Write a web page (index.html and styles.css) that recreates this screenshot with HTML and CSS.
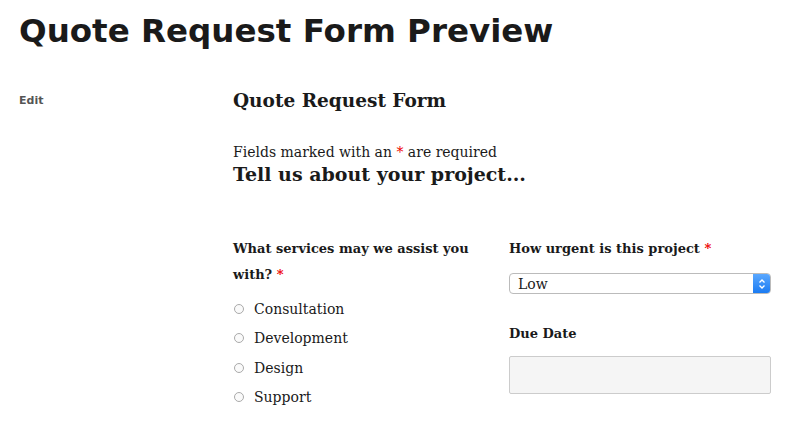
FILE: index.html
```html
<!DOCTYPE html>
<html>
<head>
<meta charset="utf-8">
<link rel="stylesheet" href="styles.css">
</head>
<body>
<h1 class="page-title">Quote Request Form Preview</h1>
<div class="layout">
  <aside class="side"><a class="edit" href="#">Edit</a></aside>
  <main class="form">
    <h2 class="form-title">Quote Request Form</h2>
    <p class="note">Fields marked with an <span class="req">*</span> are required</p>
    <h3 class="section">Tell us about your project...</h3>
    <div class="cols">
      <div class="col">
        <div class="label">What services may we assist you<br>with? <span class="req">*</span></div>
        <ul class="radios">
          <li><span class="radio"></span>Consultation</li>
          <li><span class="radio"></span>Development</li>
          <li><span class="radio"></span>Design</li>
          <li><span class="radio"></span>Support</li>
        </ul>
      </div>
      <div class="col">
        <div class="label">How urgent is this project <span class="req">*</span></div>
        <div class="select"><span class="select-val">Low</span><span class="select-btn"><svg width="8" height="12" viewBox="0 0 8 12"><path d="M1.5 4.5 L4 2 L6.5 4.5 M1.5 7.5 L4 10 L6.5 7.5" fill="none" stroke="#fff" stroke-width="1.3"/></svg></span></div>
        <div class="label due">Due Date</div>
        <div class="input"></div>
      </div>
    </div>
  </main>
</div>
</body>
</html>
```
FILE: styles.css
```css
* { box-sizing: border-box; }
body { margin: 0; background: #fff; color: #1a1a1a; font-family: "DejaVu Serif", serif; }
.page-title { margin: 0; padding: 10px 0 0 19px; font-family: "DejaVu Sans", sans-serif; font-weight: bold; font-size: 32.5px; line-height: 42px; color: #1a1a1a; }
.layout { display: flex; padding-top: 37px; }
.side { width: 233px; padding-left: 19px; }
.edit { font-family: "DejaVu Sans", sans-serif; font-size: 11px; color: #555; text-decoration: none; font-weight: 600; }
.form { width: 538px; }
.form-title { margin: 0; font-size: 18.5px; line-height: 24px; font-weight: bold; }
.note { margin: 30px 0 0; font-size: 14px; line-height: 18px; }
.req { color: #e00; }
.section { margin: 0; font-size: 19px; line-height: 26px; font-weight: bold; }
.cols { display: grid; grid-template-columns: 276px 262px; margin-top: 49px; }
.label { font-size: 13px; font-weight: bold; line-height: 26px; padding-right: 16px; }
.radios { list-style: none; margin: 6px 0 0; padding: 0; }
.radios li { display: flex; align-items: center; height: 29.5px; font-size: 14px; }
.radio { width: 10px; height: 10px; border: 1px solid #aaa; border-radius: 50%; margin: 0 10px 0 1px; background: #fafafa; }
.select { margin-top: 11px; height: 21px; border: 1px solid #bbb; border-radius: 4px; display: flex; align-items: center; justify-content: space-between; overflow: hidden; background: #fff; }
.select-val { padding-left: 8px; font-size: 14px; }
.select-btn { width: 17px; height: 100%; background: linear-gradient(#5aa8ff, #1b7bf2); display: flex; align-items: center; justify-content: center; }
.due { margin-top: 27px; }
.input { margin-top: 9px; height: 38px; border: 1px solid #ccc; border-radius: 2px; background: #f5f5f5; }
```
